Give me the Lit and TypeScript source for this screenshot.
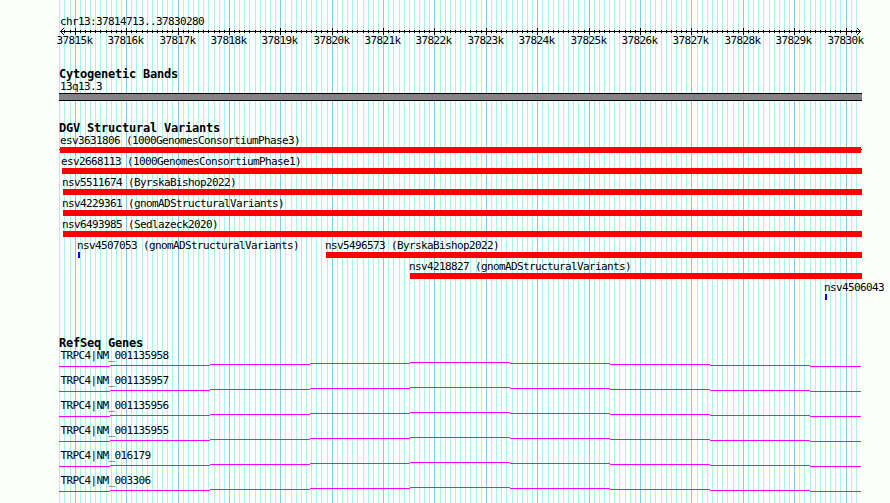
import { LitElement, html, svg, css } from "lit";
import { customElement, property } from "lit/decorators.js";
import { classMap } from "lit/directives/class-map.js";

interface Feature {
  label: string;
  start: number;
  end?: number;
  whiskers?: boolean;
}

const REGION_START = 37814713;
const REGION_END = 37830280;
const PAD_LEFT = 60;
const SCALE = 800 / (REGION_END - REGION_START);
const TRACK_LEFT = 59;
const TRACK_RIGHT = 861;

const toX = (pos: number) =>
  Math.round(PAD_LEFT + (pos - REGION_START) * SCALE);

// one tick every 100 bases, every tenth one is major
const TICKS: { x: number; pos: number; major: boolean }[] = [];
for (let pos = 37814700; pos <= 37830200; pos += 100) {
  TICKS.push({ x: toX(pos), pos, major: pos % 1000 === 0 });
}

// each row holds one or more features, in drawn pixels
const VARIANT_ROWS: Feature[][] = [
  [
    {
      label: "esv3631806 (1000GenomesConsortiumPhase3)",
      start: 60,
      end: 861,
      whiskers: true,
    },
  ],
  [{ label: "esv2668113 (1000GenomesConsortiumPhase1)", start: 62, end: 862 }],
  [{ label: "nsv5511674 (ByrskaBishop2022)", start: 63, end: 862 }],
  [{ label: "nsv4229361 (gnomADStructuralVariants)", start: 63, end: 862 }],
  [{ label: "nsv6493985 (Sedlazeck2020)", start: 63, end: 862 }],
  [
    { label: "nsv4507053 (gnomADStructuralVariants)", start: 78 },
    { label: "nsv5496573 (ByrskaBishop2022)", start: 326, end: 862 },
  ],
  [{ label: "nsv4218827 (gnomADStructuralVariants)", start: 410, end: 862 }],
  [{ label: "nsv4506043", start: 825 }],
];

const GENES = [
  "TRPC4|NM_001135958",
  "TRPC4|NM_001135957",
  "TRPC4|NM_001135956",
  "TRPC4|NM_001135955",
  "TRPC4|NM_016179",
  "TRPC4|NM_003306",
];

@customElement("scale-ruler")
export class ScaleRuler extends LitElement {
  static styles = css`
    :host {
      display: block;
      height: 46px;
    }

    svg {
      display: block;
    }

    text {
      font: 11px "DejaVu Sans Mono", monospace;
      letter-spacing: -0.622px;
      white-space: pre;
    }
  `;

  render() {
    return html`
      <svg width="890" height="46">
        <text x="60" y="25">chr13:37814713..37830280</text>
        <g shape-rendering="crispEdges">
          <rect x="60" y="31" width="801" height="1" />
          ${TICKS.filter((t) => t.x > 60).map((t) =>
            t.major
              ? svg`<rect x=${t.x} y="28" width="1" height="7" />`
              : svg`<rect x=${t.x} y="30" width="1" height="3" />`
          )}
          <path
            d="M61 30h1v1h-1zM62 29h1v1h-1zM63 28h1v1h-1zM61 32h1v1h-1zM62 33h1v1h-1zM63 34h1v1h-1z
               M859 30h1v1h-1zM858 29h1v1h-1zM857 28h1v1h-1zM859 32h1v1h-1zM858 33h1v1h-1zM857 34h1v1h-1z"
          />
        </g>
        ${TICKS.filter((t) => t.major).map(
          (t) => svg`<text x=${t.x - 18.5} y="44">${t.pos / 1000}k</text>`
        )}
      </svg>
    `;
  }
}

@customElement("variant-row")
export class VariantRow extends LitElement {
  @property({ attribute: false }) features: Feature[] = [];

  static styles = css`
    :host {
      display: grid;
      height: 21px;
    }

    .feature {
      grid-area: 1 / 1;
    }

    .label {
      height: 12px;
      line-height: 12px;
      white-space: pre;
      text-indent: -1px;
    }

    .label.whiskers {
      text-indent: 0;
    }

    .bar {
      height: 6px;
      background: #ff0000;
    }

    .bar.small {
      width: 2px;
      background: #0000ff;
    }

    /* thin stubs where the variant runs past the region */
    .bar.whiskers {
      position: relative;
    }

    .bar.whiskers::before {
      content: "";
      position: absolute;
      top: 2px;
      left: -1px;
      right: -1px;
      height: 1px;
      background: #c00000;
      z-index: -1;
    }
  `;

  render() {
    return this.features.map((f) => {
      const whiskers = !!f.whiskers;
      return html`
        <div class="feature" style="margin-left: ${f.start}px">
          <div class=${classMap({ label: true, whiskers })}>${f.label}</div>
          ${f.end
            ? html`<div
                class=${classMap({ bar: true, whiskers })}
                style="width: ${f.end - f.start}px"
              ></div>`
            : html`<div class="bar small"></div>`}
        </div>
      `;
    });
  }
}

@customElement("gene-row")
export class GeneRow extends LitElement {
  @property({ type: String }) label = "";

  static styles = css`
    :host {
      display: block;
      height: 25px;
    }

    .label {
      height: 12px;
      line-height: 12px;
      padding-left: 60.5px;
    }

    svg {
      display: block;
    }
  `;

  render() {
    // intron line, rising one pixel per segment up to the middle
    const edges = [TRACK_LEFT, 110, 210, 310, 410, 510, 610, 710, 810, TRACK_RIGHT];
    return html`
      <div class="label">${this.label}</div>
      <svg width="890" height="5" fill="#ff00ff" shape-rendering="crispEdges">
        ${edges
          .slice(0, -1)
          .map(
            (x, i) =>
              svg`<rect x=${x} y=${Math.abs(4 - i)} width=${edges[i + 1] - x} height="1" />`
          )}
      </svg>
    `;
  }
}

@customElement("app-root")
export class AppRoot extends LitElement {
  static styles = css`
    :host {
      display: block;
      position: relative;
      width: 890px;
      height: 503px;
      overflow: hidden;
      background: #fcfefc;
      color: #000;
      font: 11px "DejaVu Sans Mono", monospace;
      letter-spacing: -0.622px;
    }

    .grid {
      position: absolute;
      inset: 0;
    }

    .minor {
      fill: #acf2ec;
    }

    .major {
      fill: #84caec;
    }

    .content {
      position: relative;
      z-index: 1;
    }

    .cytoband {
      height: 54px;
      margin-top: 22px;
    }

    .variants {
      height: 215px;
    }

    h2 {
      height: 13px;
      margin: 0;
      padding-left: 59px;
      font-size: 12px;
      font-weight: bold;
      line-height: 13px;
      letter-spacing: -0.224px;
    }

    .band-name {
      height: 12px;
      line-height: 12px;
      padding-left: 60px;
    }

    .band {
      box-sizing: border-box;
      height: 8px;
      margin: 0 28px 0 59px;
      border: solid #000;
      border-width: 1px 0;
      background: #848284;
    }
  `;

  render() {
    return html`
      <svg class="grid" width="890" height="503" shape-rendering="crispEdges">
        ${TICKS.map(
          (t) =>
            svg`<rect class=${t.major ? "major" : "minor"} x=${t.x} y="0" width="1" height="503" />`
        )}
      </svg>
      <div class="content">
        <scale-ruler></scale-ruler>
        <section class="cytoband">
          <h2>Cytogenetic Bands</h2>
          <div class="band-name">13q13.3</div>
          <div class="band"></div>
        </section>
        <section class="variants">
          <h2>DGV Structural Variants</h2>
          ${VARIANT_ROWS.map(
            (row) => html`<variant-row .features=${row}></variant-row>`
          )}
        </section>
        <section class="genes">
          <h2>RefSeq Genes</h2>
          ${GENES.map((g) => html`<gene-row label=${g}></gene-row>`)}
        </section>
      </div>
    `;
  }
}
